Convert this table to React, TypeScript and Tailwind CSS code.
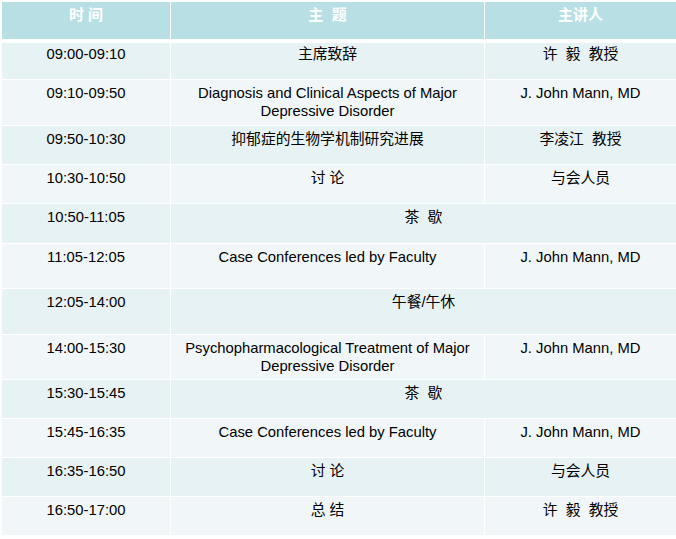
const rows: { time: string; topic: string; speaker?: string; h: number; pt?: number }[] = [
	{ time: '09:00-09:10', topic: '主席致辞', speaker: '许  毅  教授', h: 36, pt: 1 },
	{ time: '09:10-09:50', topic: 'Diagnosis and Clinical Aspects of Major Depressive Disorder', speaker: 'J. John Mann, MD', h: 45 },
	{ time: '09:50-10:30', topic: '抑郁症的生物学机制研究进展', speaker: '李凌江  教授', h: 38 },
	{ time: '10:30-10:50', topic: '讨 论', speaker: '与会人员', h: 38 },
	{ time: '10:50-11:05', topic: '茶  歇', h: 39 },
	{ time: '11:05-12:05', topic: 'Case Conferences led by Faculty', speaker: 'J. John Mann, MD', h: 44 },
	{ time: '12:05-14:00', topic: '午餐/午休', h: 45 },
	{ time: '14:00-15:30', topic: 'Psychopharmacological Treatment of Major Depressive Disorder', speaker: 'J. John Mann, MD', h: 44 },
	{ time: '15:30-15:45', topic: '茶  歇', h: 38 },
	{ time: '15:45-16:35', topic: 'Case Conferences led by Faculty', speaker: 'J. John Mann, MD', h: 38 },
	{ time: '16:35-16:50', topic: '讨 论', speaker: '与会人员', h: 38 },
	{ time: '16:50-17:00', topic: '总 结', speaker: '许  毅  教授', h: 38 },
];

export default function App() {
	return (
		<div className="w-[676px] h-[539px] bg-white pl-[2px] pt-[2px] font-['Liberation_Sans','Noto_Sans_CJK_SC',sans-serif] text-[14.8px] leading-[18px] text-black">
			<div className="flex flex-col gap-px w-[674px]">
				{/* header */}
				<div className="grid grid-cols-[168px_313px_191px] gap-x-px h-[37px] mb-[3px] text-white font-bold text-[15px]">
					<div className="bg-[#b8dfe3] text-center pt-[4px] whitespace-pre">时 间</div>
					<div className="bg-[#b8dfe3] text-center pt-[4px] whitespace-pre">主  题</div>
					<div className="bg-[#b8dfe3] text-center pt-[4px]">主讲人</div>
				</div>
				{rows.map((r, i) => {
					const bg = i % 2 === 0 ? 'bg-[#e7f2f4]' : 'bg-[#f1f7f9]';
					const pt = r.pt === 1 ? 'pt-[2px]' : 'pt-[4px]';
					return (
						<div
							key={i}
							className="grid grid-cols-[168px_313px_191px] gap-x-px"
							style={{ height: r.h }}
						>
							<div className={`${bg} ${pt} text-center`}>{r.time}</div>
							{r.speaker ? (
								<>
									<div className={`${bg} ${pt} text-center px-2`}>{r.topic}</div>
									<div className={`${bg} ${pt} text-center whitespace-pre`}>{r.speaker}</div>
								</>
							) : (
								<div className={`${bg} ${pt} col-span-2 text-center whitespace-pre`}>{r.topic}</div>
							)}
						</div>
					);
				})}
			</div>
		</div>
	);
}
